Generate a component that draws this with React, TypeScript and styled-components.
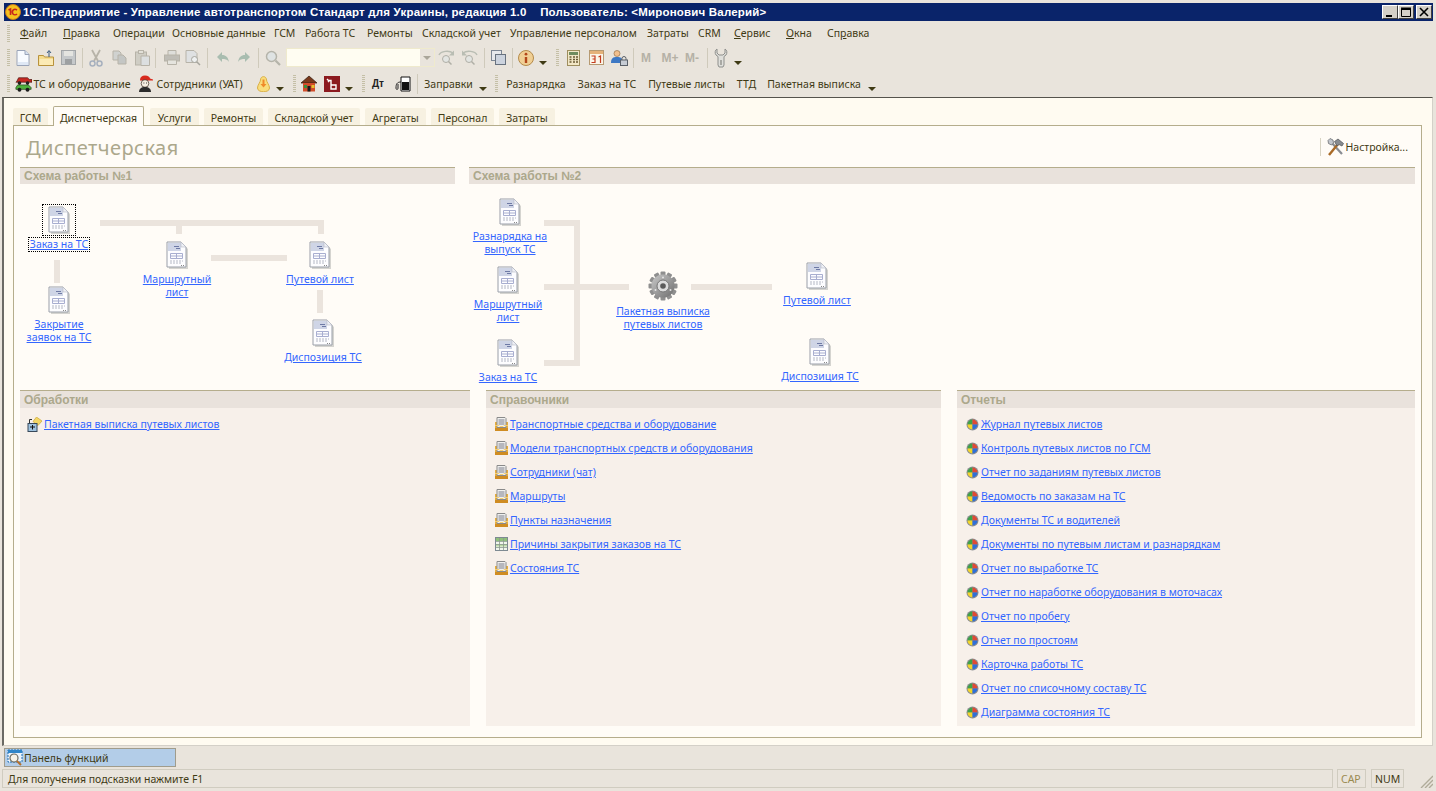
import React from 'react';
import styled, { createGlobalStyle } from 'styled-components';

const GlobalStyle = createGlobalStyle`
  html, body {
    margin: 0;
    padding: 0;
    background: #e9e4dc;
    overflow: hidden;
  }
  body, a {
    font-family: 'Noto Sans', 'Liberation Sans', sans-serif;
    font-size: 10.5px;
  }
`;

const Window = styled.div`
  width: 1436px;
  height: 791px;
  box-sizing: border-box;
  padding: 3px 3px 3px 2px;
  background: #e9e4dc;
  display: flex;
  flex-direction: column;
  color: #3f3a14;
  overflow: hidden;
`;

const TitleBar = styled.div`
  height: 18px;
  margin-left: 2px;
  background: #0a246a;
  display: flex;
  align-items: center;
  padding: 0 1px;
  flex: none;
`;

const TitleText = styled.span`
  font-family: 'Liberation Sans', sans-serif;
  font-weight: 700;
  font-size: 11.5px;
  color: #fff;
  margin-left: 2px;
  white-space: pre;
  letter-spacing: 0.19px;
  flex: 1;
`;

const WinButton = styled.button<{ $gap: number }>`
  width: 16px;
  height: 14px;
  padding: 0;
  margin-left: ${({ $gap }) => $gap}px;
  border: 1px solid;
  border-color: #fff #404040 #404040 #fff;
  background: #d4d0c8;
  display: flex;
  align-items: center;
  justify-content: center;
`;

const MenuBar = styled.div`
  height: 24px;
  display: flex;
  align-items: center;
  padding-left: 5px;
  flex: none;
`;

const Grip = styled.i`
  display: block;
  width: 3px;
  height: 17px;
  background: repeating-linear-gradient(to bottom, #c4bfa6 0, #c4bfa6 1px, transparent 1px, transparent 2px);
`;

const MenuGrip = styled(Grip)`
  margin-right: 10px;
`;

const MenuItem = styled.span<{ $w: number }>`
  width: ${({ $w }) => $w}px;
  flex: none;
  white-space: nowrap;
`;

const ToolRow = styled.div<{ $h: number }>`
  height: ${({ $h }) => $h}px;
  display: flex;
  align-items: center;
  flex: none;
`;

const ToolSlot = styled.div<{ $w: number; $gap: number }>`
  width: ${({ $w }) => $w}px;
  margin-left: ${({ $gap }) => $gap}px;
  flex: none;
  display: flex;
  align-items: center;
  justify-content: center;
  white-space: nowrap;
`;

const ToolSep = styled.i`
  display: block;
  width: 1px;
  height: 20px;
  background: #cfcabb;
`;

const DropArrow = styled.i`
  display: block;
  margin-top: 10px;
  width: 0;
  height: 0;
  border-left: 4px solid transparent;
  border-right: 4px solid transparent;
  border-top: 4px solid #3f3a14;
`;

const Combo = styled.div`
  width: 149px;
  height: 19px;
  box-sizing: border-box;
  border: 1px solid #efeacd;
  display: flex;
  background: #e9e4dc;
`;

const ComboField = styled.div`
  width: 133px;
  background: #fffdf2;
  flex: none;
`;

const ComboArrow = styled.div`
  flex: 1;
  display: flex;
  align-items: center;
  justify-content: center;
  &::after {
    content: '';
    border-left: 4px solid transparent;
    border-right: 4px solid transparent;
    border-top: 4px solid #aaa69a;
  }
`;

const MemKey = styled.b`
  font-family: 'Liberation Sans', sans-serif;
  font-size: 12px;
  color: #b5b1a6;
`;

const Workspace = styled.div`
  height: 649px;
  flex: none;
  box-sizing: border-box;
  border-top: 1px solid #55534c;
  border-left: 2px solid #6b6a64;
  border-bottom: 1px solid #d4d0c8;
  border-right: 1px solid #d4d0c8;
  background: #fffbf1;
  padding: 9px 10px 0 9px;
  display: flex;
  flex-direction: column;
`;

const TabStrip = styled.div`
  height: 18px;
  display: flex;
  align-items: flex-end;
  position: relative;
  z-index: 1;
  flex: none;
`;

const Tab = styled.div<{ $w: number; $gap: number; $active?: boolean }>`
  width: ${({ $w }) => $w}px;
  margin-left: ${({ $gap }) => $gap}px;
  box-sizing: border-box;
  height: ${({ $active }) => ($active ? 20 : 17)}px;
  margin-bottom: ${({ $active }) => ($active ? -1 : 0)}px;
  background: ${({ $active }) => ($active ? '#fffcf7' : '#f7f1e1')};
  border: ${({ $active }) => ($active ? '1px solid #b5ad8c' : '0')};
  border-bottom: 0;
  border-radius: 2px 2px 0 0;
  display: flex;
  align-items: center;
  justify-content: center;
  white-space: nowrap;
  padding-top: 2px;
`;

const Page = styled.div`
  width: 1409px;
  height: 613px;
  box-sizing: border-box;
  border: 1px solid #b5ad8c;
  background: #fffcf7;
  padding: 0 6px;
  flex: none;
`;

const PageHead = styled.div`
  height: 41px;
  display: flex;
  align-items: center;
  justify-content: space-between;
`;

const PageTitle = styled.h1`
  margin: 2px 0 0 6px;
  font-family: 'Noto Sans', sans-serif;
  font-weight: 400;
  font-size: 20px;
  letter-spacing: 0.45px;
  color: #aca88c;
`;

const Settings = styled.div`
  display: flex;
  align-items: center;
  gap: 2px;
  border-left: 1px solid #d8d4c4;
  height: 18px;
  padding-left: 6px;
  margin-right: 7px;
  white-space: nowrap;
`;

const SchemeRow = styled.div`
  height: 223px;
  display: grid;
  grid-template-columns: 435px 946px;
  gap: 14px;
`;

const ListRow = styled.div`
  display: grid;
  height: 336px;
  grid-template-columns: 450px 455px 458px;
  gap: 16px;
`;

const SectionHead = styled.div<{ $h: number }>`
  height: ${({ $h }) => $h}px;
  box-sizing: border-box;
  border-top: 1px solid #b5ad8c;
  background: #e9e2dc;
  padding-left: 4px;
  display: flex;
  align-items: center;
  font-family: 'Liberation Sans', sans-serif;
  font-weight: 700;
  font-size: 12px;
  color: #aca88c;
`;

const Canvas = styled.div`
  position: relative;
`;

const Panel = styled.section`
  background: #f7f0ea;
`;

const Links = styled.ul<{ $pad: number }>`
  list-style: none;
  margin: 0;
  padding: 4px 0 0 ${({ $pad }) => $pad}px;
`;

const LinkRow = styled.li<{ $iw: number }>`
  height: 24px;
  display: grid;
  grid-template-columns: ${({ $iw }) => $iw}px auto;
  justify-content: start;
  align-items: center;
`;

const Link = styled.a`
  color: #3366ff;
  text-decoration: underline;
  cursor: pointer;
`;

const Node = styled.div<{ $x: number; $y: number }>`
  position: absolute;
  left: ${({ $x }) => $x}px;
  top: ${({ $y }) => $y}px;
  width: 120px;
  margin-left: -60px;
  display: flex;
  flex-direction: column;
  align-items: center;
  text-align: center;
  line-height: 13px;
`;

const NodeIcon = styled.div<{ $focus?: boolean }>`
  display: flex;
  margin-bottom: 4px;
  outline: ${({ $focus }) => ($focus ? '1px dotted #000' : '0')};
  outline-offset: 1px;
  padding: 0 4px;
`;

const NodeLabel = styled.div<{ $focus?: boolean }>`
  outline: ${({ $focus }) => ($focus ? '1px dotted #000' : '0')};
  padding: 0 1px;
  white-space: pre-line;
`;

const Wire = styled.i<{ $x: number; $y: number; $w: number; $h: number }>`
  position: absolute;
  left: ${({ $x }) => $x}px;
  top: ${({ $y }) => $y}px;
  width: ${({ $w }) => $w}px;
  height: ${({ $h }) => $h}px;
  background: #ebe4dd;
`;

const TaskBar = styled.div`
  height: 23px;
  flex: none;
  padding: 2px 0 0 2px;
  box-sizing: border-box;
`;

const TaskButton = styled.div`
  width: 172px;
  height: 19px;
  box-sizing: border-box;
  background: #b3cde8;
  border: 1px solid #a09c8c;
  display: flex;
  align-items: center;
  gap: 1px;
  padding-left: 2px;
`;

const StatusBar = styled.div`
  height: 19px;
  flex: none;
  display: flex;
  align-items: stretch;
  position: relative;
`;

const StatusCell = styled.div<{ $w: number; $gap: number; $muted?: boolean }>`
  width: ${({ $w }) => $w}px;
  margin-left: ${({ $gap }) => $gap}px;
  box-sizing: border-box;
  border: 1px solid #d0ccc0;
  display: flex;
  align-items: center;
  padding-left: ${({ $w }) => ($w > 100 ? 5 : 3)}px;
  color: ${({ $muted }) => ($muted ? '#9a8a50' : '#3f3a14')};
  white-space: nowrap;
`;

const ResizeGrip = styled.svg`
  position: absolute;
  right: 0;
  bottom: 0;
`;

const Dt = styled.span`
  font-family: 'Liberation Sans', sans-serif;
  font-weight: 700;
  font-size: 10px;
  color: #222;
`;

/* ---------- icons ---------- */

const Doc = () => (
  <svg width="22" height="28" viewBox="0 0 22 28">
    <path d="M3 3h14l5 5v20H3z" fill="#d5d4d0" />
    <path d="M1 1h14l5 5v20H1z" fill="#fdfdff" stroke="#9a9fa8" />
    <path d="M2 2h13v8H2z" fill="#cfd5e6" />
    <path d="M15 1l5 5h-5z" fill="#eef0f6" stroke="#b5b9c2" strokeWidth=".6" />
    <path d="M8 5.500h5M10 7.500h4" stroke="#6e7aa5" />
    <path d="M4.500 12.500h12v5h-12zM4.500 15h12M10.500 12.500v5" fill="none" stroke="#a8aed0" />
    <path d="M4 20h13M4 22h11" stroke="#b4b8c4" strokeDasharray="2 1" />
    <path d="M15 24.500h1M17 24.500h1" stroke="#888" />
  </svg>
);

const Gear = () => {
  const teeth = Array.from({ length: 12 }, (_, i) => i * 30);
  return (
    <svg width="30" height="30" viewBox="0 0 30 30">
      <defs>
        <linearGradient id="gearFill" x1="0" y1="0" x2="1" y2="1">
          <stop offset="0" stopColor="#c9c9c9" />
          <stop offset="1" stopColor="#6e6e6e" />
        </linearGradient>
      </defs>
      {teeth.map((a) => (
        <rect key={a} x="12.500" y="0.500" width="5" height="6" rx="1" fill="#8f8f8f" transform={`rotate(${a} 15 15)`} />
      ))}
      <circle cx="15" cy="15" r="11.500" fill="url(#gearFill)" />
      <circle cx="15" cy="15" r="6" fill="#dcdcdc" stroke="#777" />
      <circle cx="15" cy="15" r="2.800" fill="#5b5b5b" />
      <circle cx="15" cy="6.500" r="1" fill="#e4e4e4" />
      <circle cx="22.500" cy="19" r="1" fill="#e4e4e4" />
      <circle cx="7.500" cy="19" r="1" fill="#e4e4e4" />
    </svg>
  );
};

const RefBook = () => (
  <svg width="13" height="14" viewBox="0 0 13 14">
    <path d="M0 5h13v9H0z" fill="#e8ae3c" />
    <path d="M0 11h13v3H0z" fill="#cf8c22" />
    <path d="M2 .5h8l1 1v9H2z" fill="#f0f0ee" stroke="#8a8a8a" />
    <path d="M3.500 3h6M3.500 5h6M3.500 7h6" stroke="#7c7f8c" />
    <path d="M0 8h4l1 2h3l1-2h4v1H0z" fill="#f6cf72" />
  </svg>
);

const TableIcon = () => (
  <svg width="13" height="14" viewBox="0 0 13 14">
    <rect x=".5" y=".5" width="12" height="13" fill="#f2f6ee" stroke="#7e8a92" />
    <path d="M1 1h11v3H1z" fill="#8fc07a" />
    <path d="M1 7h11v2.500H1z" fill="#bcd9a6" />
    <path d="M4.500 1v12M8.500 1v12M1 4.500h11M1 7.500h11M1 10.500h11" stroke="#8c9a8e" strokeWidth=".8" />
  </svg>
);

const ReportIcon = () => (
  <svg width="13" height="13" viewBox="0 0 13 13">
    <circle cx="6.500" cy="6.500" r="6" fill="#8d8f92" />
    <path d="M6.500 1.500a5 5 0 0 0-5 5h5z" fill="#3ea24a" />
    <path d="M6.500 1.500a5 5 0 0 1 5 5h-5z" fill="#e04a35" />
    <path d="M1.500 6.500a5 5 0 0 0 5 5v-5z" fill="#f4d629" />
    <path d="M11.500 6.500a5 5 0 0 1-5 5v-5z" fill="#2f6fd8" />
  </svg>
);

const BatchIcon = () => (
  <svg width="16" height="15" viewBox="0 0 16 15">
    <path d="M9.500 0l5.500 4-4 4.500L6 4.500z" fill="#f3d766" stroke="#c9a63a" strokeWidth=".7" />
    <path d="M5 2.500H2.500v4" fill="none" stroke="#333" />
    <rect x="1" y="6.500" width="9" height="8" fill="#9fc3e0" stroke="#39495a" />
    <path d="M3 10h5M5.500 8v4.500" stroke="#111" />
  </svg>
);

const Hammer = () => (
  <svg width="17" height="18" viewBox="0 0 17 18">
    <path d="M4 4l11 12" stroke="#8a8d92" strokeWidth="2.200" />
    <path d="M1 2.500L3 .5l3 1.500 .5 3-2 2-3-1.500z" fill="#c2c6cc" stroke="#5e6165" strokeWidth=".7" />
    <path d="M2 17L11 6" stroke="#a96a26" strokeWidth="2.400" />
    <path d="M7.500 3.500L11 1l5.500 4.500-1.500 2.500-3-1.500-2 1.500z" fill="#878b90" stroke="#4f5256" strokeWidth=".7" />
  </svg>
);

const PanelIcon = () => (
  <svg width="16" height="17" viewBox="0 0 16 17">
    <rect x="1" y="1" width="14" height="12" fill="#eaf3fb" stroke="#1f6fb2" strokeDasharray="2 1" />
    <path d="M1 1h14v3H1z" fill="#2f86c9" />
    <circle cx="7" cy="9" r="4" fill="#f6f3e8" stroke="#6b6b60" strokeWidth="1.200" />
    <path d="M10 12l4 4" stroke="#b5702c" strokeWidth="2" />
  </svg>
);

const TOOL_GREY = '#b7b3a8';

const ico = {
  newDoc: (
    <svg width="14" height="16" viewBox="0 0 14 16">
      <path d="M1 .5h8l4 4v11H1z" fill="#f8fbff" stroke="#9aa4b8" />
      <path d="M9 .5v4h4" fill="#d6e2f2" stroke="#9aa4b8" />
      <path d="M2 12h10v3H2z" fill="#dfe8f5" />
    </svg>
  ),
  open: (
    <svg width="16" height="16" viewBox="0 0 16 16">
      <path d="M.5 5.500h5l1 1.500h9v8.500H.5z" fill="#f5dc8e" stroke="#b8923c" />
      <path d="M1.500 9h13.500v6H1.500z" fill="#fbeab5" />
      <path d="M11 7V1M9 3l2-2.500L13 3" fill="none" stroke="#3a5a7e" />
    </svg>
  ),
  save: (
    <svg width="15" height="15" viewBox="0 0 15 15">
      <rect x=".5" y=".5" width="14" height="14" fill="#c5c8ca" stroke="#a3a6a8" />
      <path d="M3 1h9v5H3z" fill="#e4e4e0" />
      <path d="M4 9h7v5H4z" fill="#9da0a2" />
    </svg>
  ),
  cut: (
    <svg width="14" height="18" viewBox="0 0 14 18">
      <path d="M3 1l6 11M11 1L5 12" stroke={TOOL_GREY} strokeWidth="1.800" />
      <circle cx="3.500" cy="14.500" r="2.500" fill="none" stroke="#a6b0be" strokeWidth="1.500" />
      <circle cx="10.500" cy="14.500" r="2.500" fill="none" stroke="#a6b0be" strokeWidth="1.500" />
    </svg>
  ),
  copy: (
    <svg width="15" height="15" viewBox="0 0 15 15">
      <path d="M1 1h6l2 2v7H1z" fill="#d0d2d0" stroke={TOOL_GREY} />
      <path d="M6 5h5l3 3v6H6z" fill="#c4c6c4" stroke={TOOL_GREY} />
    </svg>
  ),
  paste: (
    <svg width="15" height="16" viewBox="0 0 15 16">
      <rect x=".5" y="2" width="11" height="13" fill="#cfcdc4" stroke={TOOL_GREY} />
      <rect x="3.500" y=".5" width="5" height="3" fill="#e2e0d8" stroke={TOOL_GREY} />
      <path d="M6 6h8.500v9.500H6z" fill="#dcdfe0" stroke={TOOL_GREY} />
    </svg>
  ),
  print: (
    <svg width="16" height="15" viewBox="0 0 16 15">
      <path d="M4 .5h8v5H4z" fill="#dededa" stroke={TOOL_GREY} />
      <rect x=".5" y="5" width="15" height="6" fill="#bfbdb6" stroke={TOOL_GREY} />
      <path d="M3.500 10h9v4.500h-9z" fill="#e5e4de" stroke={TOOL_GREY} />
    </svg>
  ),
  preview: (
    <svg width="16" height="16" viewBox="0 0 16 16">
      <path d="M1 .5h8l3 3v9H1z" fill="#dfe1e2" stroke={TOOL_GREY} />
      <circle cx="9.500" cy="9.500" r="3" fill="#eef0f0" stroke="#a7a69e" />
      <path d="M12 12l3 3" stroke="#a7a69e" strokeWidth="1.500" />
    </svg>
  ),
  undo: (
    <svg width="12" height="11" viewBox="0 0 12 11">
      <path d="M5 0v3c4 0 6 2 7 7-2-3-4-3-7-3v3L0 5z" fill="#a9bdb0" />
    </svg>
  ),
  redo: (
    <svg width="12" height="11" viewBox="0 0 12 11">
      <path d="M7 0v3C3 3 1 5 0 10c2-3 4-3 7-3v3l5-5z" fill="#a9bdb0" />
    </svg>
  ),
  find: (
    <svg width="16" height="16" viewBox="0 0 16 16">
      <circle cx="6.500" cy="6.500" r="5" fill="#dfe3e3" stroke="#b5b4aa" strokeWidth="1.500" />
      <path d="M10.500 10.500l4.500 4.500" stroke="#b5b4aa" strokeWidth="2.200" />
    </svg>
  ),
  findNext: (
    <svg width="17" height="15" viewBox="0 0 17 15">
      <path d="M1 5C3 1 11 0 15 3" fill="none" stroke="#b9bdb3" strokeWidth="1.500" />
      <path d="M16 .5v5h-5z" fill="#b9bdb3" />
      <circle cx="8" cy="9" r="3.500" fill="#e3e5e2" stroke="#b0afa6" />
      <path d="M10.500 11.500l3 3" stroke="#b0afa6" strokeWidth="1.500" />
    </svg>
  ),
  findPrev: (
    <svg width="17" height="15" viewBox="0 0 17 15">
      <path d="M16 5C14 1 6 0 2 3" fill="none" stroke="#b9bdb3" strokeWidth="1.500" />
      <path d="M1 .5v5h5z" fill="#b9bdb3" />
      <circle cx="8" cy="9" r="3.500" fill="#e3e5e2" stroke="#b0afa6" />
      <path d="M10.500 11.500l3 3" stroke="#b0afa6" strokeWidth="1.500" />
    </svg>
  ),
  windows: (
    <svg width="15" height="15" viewBox="0 0 15 15">
      <rect x=".5" y=".5" width="10" height="10" fill="#e6e8ec" stroke="#7c8694" />
      <rect x="4.500" y="4.500" width="10" height="10" fill="#ccd3de" stroke="#68727f" />
    </svg>
  ),
  info: (
    <svg width="16" height="16" viewBox="0 0 16 16">
      <circle cx="8" cy="8" r="7.500" fill="#f0cf94" stroke="#b48a4a" />
      <circle cx="8" cy="4.200" r="1.400" fill="#b3471a" />
      <path d="M8 7v6" stroke="#b3471a" strokeWidth="2.400" />
    </svg>
  ),
  calc: (
    <svg width="13" height="16" viewBox="0 0 13 16">
      <rect x=".5" y=".5" width="12" height="15" fill="#f2e7c6" stroke="#9e8e5e" />
      <path d="M2 2h9v3H2z" fill="#6f8c5e" />
      <path d="M2.500 7h2M6 7h2M9 7h2M2.500 9.500h2M6 9.500h2M9 9.500h2M2.500 12h2M6 12h2M9 12h2" stroke="#6a5a34" strokeWidth="1.400" />
    </svg>
  ),
  calendar: (
    <svg width="15" height="15" viewBox="0 0 15 15">
      <rect x=".5" y=".5" width="14" height="14" fill="#fbf6ea" stroke="#b69a72" />
      <path d="M1 1h13v3H1z" fill="#e5b27a" />
      <path d="M2.500 6h3.500v3H3.500M6 9v3.500H2.500M9.500 7l2-1v7" fill="none" stroke="#c43b1d" strokeWidth="1.200" />
    </svg>
  ),
  user: (
    <svg width="17" height="16" viewBox="0 0 17 16">
      <circle cx="6" cy="3.500" r="3" fill="#f2c08e" stroke="#8a6238" strokeWidth=".6" />
      <path d="M0 13c0-5 2-6 6-6s5 1 5 3v3z" fill="#3d78c4" />
      <rect x="9.500" y="10" width="7" height="5.500" fill="#c7ccd4" stroke="#5a6068" />
      <path d="M11 10V8.500a2 2 0 0 1 4 0V10" fill="none" stroke="#5a6068" />
    </svg>
  ),
  wrench: (
    <svg width="14" height="20" viewBox="0 0 14 20">
      <path d="M3 1C1 2 .5 5 2 7l2 1.500V17l1 2h4l1-2V8.500L12 7c1.500-2 1-5-1-6v4l-2 2H5L3 5z" fill="#dfdfdb" stroke="#8e8f8c" />
      <rect x="6" y="12" width="2" height="5" fill="#a9a9a4" />
    </svg>
  ),
  vehicles: (
    <svg width="17" height="18" viewBox="0 0 19 18">
      <path d="M2 6l2-4h10l2 2h3v3H1z" fill="#c62a22" stroke="#3a0d0a" strokeWidth=".7" />
      <circle cx="5" cy="8" r="2" fill="#222" />
      <circle cx="14" cy="8" r="2" fill="#222" />
      <path d="M1 13l2-3h12l3 3v2H1z" fill="#4fb13e" stroke="#12380c" strokeWidth=".7" />
      <circle cx="5" cy="15.500" r="2.200" fill="#1c1c1c" />
      <circle cx="14" cy="15.500" r="2.200" fill="#1c1c1c" />
    </svg>
  ),
  staff: (
    <svg width="15" height="17" viewBox="0 0 15 17">
      <path d="M2 5C2 2 4 .5 7 .5s5 1.500 5 3l3 1v1H2z" fill="#d82a1e" />
      <circle cx="7" cy="8.500" r="3.800" fill="#f5eee2" stroke="#3a2a20" strokeWidth=".7" />
      <path d="M5.500 8h.8M8 8h.8" stroke="#111" />
      <path d="M1 17c0-3 2-5 6-5s6 2 6 5z" fill="#2b2b2b" />
    </svg>
  ),
  bell: (
    <svg width="13" height="16" viewBox="0 0 13 16">
      <path d="M3.500 4C3.500-.5 9.500-.5 9.500 4c0 2 3 5 3 8 0 5-12 5-12 0 0-3 3-6 3-8z" fill="#f9dd7c" stroke="#d9ae44" />
      <path d="M5.500 3.500h2V8h2l-3 3.500-3-3.500h2z" fill="#ef8a2a" />
    </svg>
  ),
  house: (
    <svg width="16" height="17" viewBox="0 0 16 17">
      <path d="M0 8l8-7 8 7z" fill="#7a3a1c" stroke="#2e170b" strokeWidth=".7" />
      <rect x="2" y="8" width="12" height="8.500" fill="#d14c2a" />
      <rect x="3" y="10" width="3" height="3" fill="#3d8f3a" />
      <rect x="6.500" y="11" width="3" height="5.500" fill="#1a1a1a" />
      <rect x="10.500" y="10" width="3" height="3" fill="#e6c32e" />
    </svg>
  ),
  redBox: (
    <svg width="16" height="16" viewBox="0 0 16 16">
      <rect width="16" height="16" fill="#8c1a1f" />
      <path d="M3 3l2 2-1 1M4.500 4.500H7V13h5V9H7" fill="none" stroke="#fff" strokeWidth="1.400" />
    </svg>
  ),
  fuel: (
    <svg width="16" height="16" viewBox="0 0 16 16">
      <path d="M6 1h9v14H6z" fill="#fff" stroke="#111" />
      <path d="M7 6h7v8H7z" fill="#111" />
      <path d="M6 6C2 6 1 8 1 12c0 2 2 2 2 0V8" fill="none" stroke="#222" />
    </svg>
  ),
};

/* ---------- data ---------- */

const menu: [React.ReactNode, number][] = [
  [<><u>Ф</u>айл</>, 43],
  [<><u>П</u>равка</>, 50],
  ['Операции', 59],
  ['Основные данные', 102],
  ['ГСМ', 31],
  ['Работа ТС', 62],
  ['Ремонты', 55],
  ['Складской учет', 88],
  ['Управление персоналом', 137],
  ['Затраты', 51],
  ['CRM', 36],
  [<><u>С</u>ервис</>, 52],
  [<><u>О</u>кна</>, 41],
  [<>Сп<u>р</u>авка</>, 50],
];

const drop = <DropArrow />;
const grip = <Grip />;
const sep = <ToolSep />;

type Tool = [number, number, React.ReactNode];

const toolbarOne: Tool[] = [
  [7, 3, grip], [15, 16, ico.newDoc], [38, 16, ico.open], [60, 16, ico.save], [81, 2, sep],
  [89, 14, ico.cut], [111, 16, ico.copy], [134, 16, ico.paste], [154, 2, sep],
  [164, 16, ico.print], [185, 16, ico.preview], [206, 2, sep], [217, 12, ico.undo], [238, 12, ico.redo], [257, 2, sep],
  [265, 16, ico.find], [286, 149, <Combo><ComboField /><ComboArrow /></Combo>],
  [438, 17, ico.findNext], [461, 17, ico.findPrev], [483, 2, sep], [490, 16, ico.windows], [511, 2, sep],
  [518, 16, ico.info], [539, 8, drop], [556, 3, grip], [567, 13, ico.calc], [589, 15, ico.calendar], [611, 17, ico.user], [632, 2, sep],
  [640, 12, <MemKey>M</MemKey>], [661, 18, <MemKey>M+</MemKey>], [684, 16, <MemKey>M-</MemKey>], [706, 2, sep],
  [714, 14, ico.wrench], [734, 8, drop],
];

const toolbarTwo: Tool[] = [
  [7, 3, grip], [15, 17, ico.vehicles], [34, 96, 'ТС и оборудование'], [138, 15, ico.staff], [154, 91, 'Сотрудники (УАТ)'],
  [256, 14, ico.bell], [276, 8, drop], [293, 3, grip], [301, 16, ico.house], [324, 16, ico.redBox], [345, 8, drop], [362, 3, grip],
  [371, 14, <Dt>Дт</Dt>], [395, 16, ico.fuel], [416, 2, sep], [424, 49, 'Заправки'], [479, 8, drop], [495, 3, grip],
  [505, 62, 'Разнарядка'], [576, 62, 'Заказ на ТС'], [647, 79, 'Путевые листы'], [735, 23, 'ТТД'], [766, 96, 'Пакетная выписка'], [868, 8, drop],
];

const tabs: [string, number, number][] = [
  ['ГСМ', 35, 0],
  ['Диспетчерская', 91, 5],
  ['Услуги', 49, 6],
  ['Ремонты', 59, 5],
  ['Складской учет', 92, 5],
  ['Агрегаты', 61, 5],
  ['Персонал', 63, 5],
  ['Затраты', 56, 5],
];

const directories = [
  'Транспортные средства и оборудование',
  'Модели транспортных средств и оборудования',
  'Сотрудники (чат)',
  'Маршруты',
  'Пункты назначения',
  'Причины закрытия заказов на ТС',
  'Состояния ТС',
];

const reports = [
  'Журнал путевых листов',
  'Контроль путевых листов по ГСМ',
  'Отчет по заданиям путевых листов',
  'Ведомость по заказам на ТС',
  'Документы ТС и водителей',
  'Документы по путевым листам и разнарядкам',
  'Отчет по выработке ТС',
  'Отчет по наработке оборудования в моточасах',
  'Отчет по пробегу',
  'Отчет по простоям',
  'Карточка работы ТС',
  'Отчет по списочному составу ТС',
  'Диаграмма состояния ТС',
];

type NodeData = { x: number; y: number; label: string; gear?: boolean; focus?: boolean };
type WireData = [number, number, number, number];

// coordinates are relative to the canvas under the section heading
const schemeOne: NodeData[] = [
  { x: 39, y: 22, label: 'Заказ на ТС', focus: true },
  { x: 39, y: 102, label: 'Закрытие\nзаявок на ТС' },
  { x: 157, y: 57, label: 'Маршрутный\nлист' },
  { x: 300, y: 57, label: 'Путевой лист' },
  { x: 303, y: 135, label: 'Диспозиция ТС' },
];

const wiresOne: WireData[] = [
  [34, 76, 6, 23],
  [80, 36, 224, 6],
  [156, 42, 6, 8],
  [298, 42, 6, 8],
  [191, 71, 76, 6],
  [297, 106, 6, 23],
];

const schemeTwo: NodeData[] = [
  { x: 41, y: 14, label: 'Разнарядка на\nвыпуск ТС' },
  { x: 39, y: 82, label: 'Маршрутный\nлист' },
  { x: 39, y: 155, label: 'Заказ на ТС' },
  { x: 194, y: 87, label: 'Пакетная выписка\nпутевых листов', gear: true },
  { x: 348, y: 78, label: 'Путевой лист' },
  { x: 351, y: 154, label: 'Диспозиция ТС' },
];

const wiresTwo: WireData[] = [
  [75, 36, 36, 6],
  [105, 36, 6, 146],
  [75, 176, 36, 6],
  [75, 100, 85, 6],
  [222, 100, 81, 6],
];

const Scheme = ({ nodes, wires }: { nodes: NodeData[]; wires: WireData[] }) => (
  <Canvas>
    {wires.map(([x, y, w, h], i) => (
      <Wire key={i} $x={x} $y={y} $w={w} $h={h} />
    ))}
    {nodes.map((n) => (
      <Node key={n.label} $x={n.x} $y={n.y}>
        <NodeIcon $focus={n.focus}>{n.gear ? <Gear /> : <Doc />}</NodeIcon>
        <NodeLabel $focus={n.focus}>
          <Link>{n.label}</Link>
        </NodeLabel>
      </Node>
    ))}
  </Canvas>
);

const Toolbar = ({ items, h }: { items: Tool[]; h: number }) => (
  <ToolRow $h={h}>
    {items.map(([x, w, node], i) => {
      const prev = i === 0 ? 2 : items[i - 1][0] + items[i - 1][1];
      return (
        <ToolSlot key={i} $w={w} $gap={x - prev}>
          {node}
        </ToolSlot>
      );
    })}
  </ToolRow>
);

const App: React.FC = () => {
  return (
    <Window>
      <GlobalStyle />
      <TitleBar>
        <svg width="16" height="16" viewBox="0 0 16 16">
          <circle cx="8" cy="8" r="7.500" fill="#f6c21c" stroke="#c9781a" />
          <path d="M3.500 6l2-1v6M8 10c-2-3 1-6 4-4M8 10c1 1 3 1 4 0" fill="none" stroke="#c8261c" strokeWidth="1.600" />
        </svg>
        <TitleText>{'1С:Предприятие - Управление автотранспортом Стандарт для Украины, редакция 1.0    Пользователь: <Миронович Валерий>'}</TitleText>
        <WinButton $gap={0}>
          <svg width="10" height="10" viewBox="0 0 10 10"><path d="M1 8h6v2H1z" fill="#000" /></svg>
        </WinButton>
        <WinButton $gap={0}>
          <svg width="10" height="10" viewBox="0 0 10 10"><path d="M.5 1.500h9v8h-9zM0 1h10v1.500H0z" fill="none" stroke="#000" /></svg>
        </WinButton>
        <WinButton $gap={2}>
          <svg width="10" height="10" viewBox="0 0 10 10"><path d="M1 1l8 8M9 1L1 9" stroke="#000" strokeWidth="1.600" /></svg>
        </WinButton>
      </TitleBar>
      <MenuBar>
        <MenuGrip />
        {menu.map(([label, w], i) => (
          <MenuItem key={i} $w={w}>{label}</MenuItem>
        ))}
      </MenuBar>
      <Toolbar items={toolbarOne} h={25} />
      <Toolbar items={toolbarTwo} h={27} />
      <Workspace>
        <TabStrip>
          {tabs.map(([label, w, gap]) => (
            <Tab key={label} $w={w} $gap={gap} $active={label === 'Диспетчерская'}>{label}</Tab>
          ))}
        </TabStrip>
        <Page>
          <PageHead>
            <PageTitle>Диспетчерская</PageTitle>
            <Settings><Hammer />Настройка...</Settings>
          </PageHead>
          <SchemeRow>
            <div>
              <SectionHead $h={17}>Схема работы №1</SectionHead>
              <Scheme nodes={schemeOne} wires={wiresOne} />
            </div>
            <div>
              <SectionHead $h={17}>Схема работы №2</SectionHead>
              <Scheme nodes={schemeTwo} wires={wiresTwo} />
            </div>
          </SchemeRow>
          <ListRow>
            <Panel>
              <SectionHead $h={18}>Обработки</SectionHead>
              <Links $pad={7}>
                <LinkRow $iw={17}><BatchIcon /><Link>Пакетная выписка путевых листов</Link></LinkRow>
              </Links>
            </Panel>
            <Panel>
              <SectionHead $h={18}>Справочники</SectionHead>
              <Links $pad={9}>
                {directories.map((d) => (
                  <LinkRow key={d} $iw={15}>
                    {d.startsWith('Причины') ? <TableIcon /> : <RefBook />}
                    <Link>{d}</Link>
                  </LinkRow>
                ))}
              </Links>
            </Panel>
            <Panel>
              <SectionHead $h={18}>Отчеты</SectionHead>
              <Links $pad={9}>
                {reports.map((r) => (
                  <LinkRow key={r} $iw={15}><ReportIcon /><Link>{r}</Link></LinkRow>
                ))}
              </Links>
            </Panel>
          </ListRow>
        </Page>
      </Workspace>
      <TaskBar>
        <TaskButton><PanelIcon />Панель функций</TaskButton>
      </TaskBar>
      <StatusBar>
        <StatusCell $w={1331} $gap={0}>Для получения подсказки нажмите F1</StatusCell>
        <StatusCell $w={29} $gap={4} $muted>CAP</StatusCell>
        <StatusCell $w={33} $gap={5}>NUM</StatusCell>
        <ResizeGrip width="13" height="13" viewBox="0 0 13 13">
          <path d="M13 1L1 13M13 5L5 13M13 9L9 13" stroke="#b0ac9a" strokeWidth="1.400" />
        </ResizeGrip>
      </StatusBar>
    </Window>
  );
};

export default App;
